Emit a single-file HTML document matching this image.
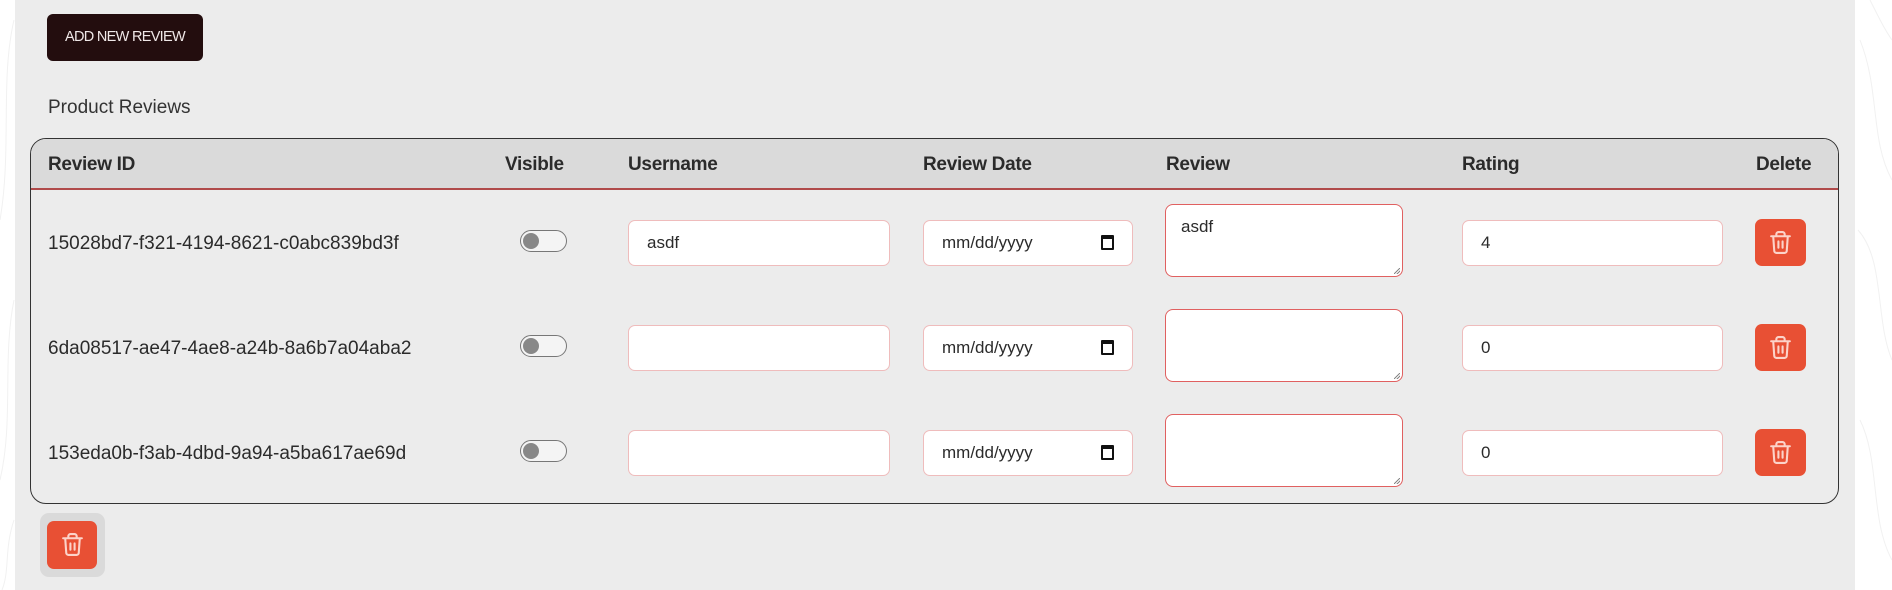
<!DOCTYPE html>
<html><head><style>
*{box-sizing:border-box;margin:0;padding:0}
body{width:1892px;height:590px;background:#fff;font-family:"Liberation Sans",sans-serif;position:relative;overflow:hidden;color:#2b2b2b}
#panel{position:absolute;left:15px;top:0;width:1840px;height:590px;background:#ececec}
.btn{position:absolute;left:47px;top:14px;width:156px;height:47px;background:#230d0e;border-radius:6px;color:#f0e8e8;font-size:14.5px;letter-spacing:-0.7px;line-height:47px;text-align:center}
.title{position:absolute;left:48px;top:97px;font-size:19px;color:#333}
.table{position:absolute;left:30px;top:138px;width:1809px;height:366px;border:1px solid #333;border-radius:16px;overflow:hidden}
.head{position:absolute;left:0;top:0;width:100%;height:51px;background:#dadada;border-bottom:2px solid #b04a4a}
.h{position:absolute;top:15px;font-weight:bold;font-size:19px;color:#2b2b2b;letter-spacing:-0.3px}
.id{position:absolute;left:17px;font-size:19px}
.tog{position:absolute;left:489px;width:47px;height:22px;border:1px solid #777;border-radius:11px;background:#f4f4f4}
.tog:after{content:"";position:absolute;left:2px;top:2px;width:16px;height:16px;border-radius:50%;background:#888}
.in{position:absolute;height:46px;background:#fff;border:1px solid #efbcbc;border-radius:7px;font-size:17px;padding-left:18px;line-height:44px}
.ta{position:absolute;left:1134px;width:238px;height:73px;background:#fff;border:1.5px solid #e06060;border-radius:8px;font-size:17px;padding:12px 15px}
.ta:after{content:"";position:absolute;right:2px;bottom:2px;width:6px;height:6px;background:linear-gradient(135deg,transparent 45%,#888 45%,#888 55%,transparent 55%,transparent 70%,#888 70%,#888 80%,transparent 80%)}
.del{position:absolute;left:1724px;width:51px;height:47px;background:#e85034;border-radius:7px}
.del svg,.bdel svg{position:absolute;left:13px;top:11px}
.cal{position:absolute;right:18px;top:14px;width:13px;height:15px;border:2px solid #111;border-top-width:4px;border-radius:1px}
</style></head><body>
<svg style="position:absolute;left:0;top:0" width="1892" height="590" fill="none" stroke="#f1f1f1" stroke-width="1">
<path d="M14 20 C0 80 12 150 0 220 M14 300 C2 360 14 420 0 480 M14 520 C4 550 10 570 2 590"/>
<path d="M1860 40 C1880 90 1870 140 1892 180 M1858 230 C1885 260 1875 320 1892 360 M1860 420 C1880 460 1870 520 1892 560 M1870 0 C1880 20 1885 30 1892 40"/>
</svg>
<div id="panel"></div>
<div class="btn">ADD NEW REVIEW</div>
<div class="title">Product Reviews</div>
<div class="table">
 <div class="head">
  <div class="h" style="left:17px">Review ID</div>
  <div class="h" style="left:474px">Visible</div>
  <div class="h" style="left:597px">Username</div>
  <div class="h" style="left:892px">Review Date</div>
  <div class="h" style="left:1135px">Review</div>
  <div class="h" style="left:1431px">Rating</div>
  <div class="h" style="left:1725px">Delete</div>
 </div>
 <div class="id" style="top:94px">15028bd7-f321-4194-8621-c0abc839bd3f</div>
 <div class="tog" style="top:91px"></div>
 <div class="in" style="left:597px;top:81px;width:262px">asdf</div>
 <div class="in" style="left:892px;top:81px;width:210px">mm/dd/yyyy<span class="cal"></span></div>
 <div class="ta" style="top:65px">asdf</div>
 <div class="in" style="left:1431px;top:81px;width:261px">4</div>
 <div class="del" style="top:80px"><svg width="25" height="25" viewBox="0 0 24 24" fill="none" stroke="#fcd3c9" stroke-width="2" stroke-linecap="round" stroke-linejoin="round"><path d="M3 6h18M8 6V4a2 2 0 0 1 2-2h4a2 2 0 0 1 2 2v2M5 6l1 14a2 2 0 0 0 2 2h8a2 2 0 0 0 2-2l1-14M10 11v6M14 11v6"/></svg></div>

 <div class="id" style="top:199px">6da08517-ae47-4ae8-a24b-8a6b7a04aba2</div>
 <div class="tog" style="top:196px"></div>
 <div class="in" style="left:597px;top:186px;width:262px"></div>
 <div class="in" style="left:892px;top:186px;width:210px">mm/dd/yyyy<span class="cal"></span></div>
 <div class="ta" style="top:170px"></div>
 <div class="in" style="left:1431px;top:186px;width:261px">0</div>
 <div class="del" style="top:185px"><svg width="25" height="25" viewBox="0 0 24 24" fill="none" stroke="#fcd3c9" stroke-width="2" stroke-linecap="round" stroke-linejoin="round"><path d="M3 6h18M8 6V4a2 2 0 0 1 2-2h4a2 2 0 0 1 2 2v2M5 6l1 14a2 2 0 0 0 2 2h8a2 2 0 0 0 2-2l1-14M10 11v6M14 11v6"/></svg></div>

 <div class="id" style="top:304px">153eda0b-f3ab-4dbd-9a94-a5ba617ae69d</div>
 <div class="tog" style="top:301px"></div>
 <div class="in" style="left:597px;top:291px;width:262px"></div>
 <div class="in" style="left:892px;top:291px;width:210px">mm/dd/yyyy<span class="cal"></span></div>
 <div class="ta" style="top:275px"></div>
 <div class="in" style="left:1431px;top:291px;width:261px">0</div>
 <div class="del" style="top:290px"><svg width="25" height="25" viewBox="0 0 24 24" fill="none" stroke="#fcd3c9" stroke-width="2" stroke-linecap="round" stroke-linejoin="round"><path d="M3 6h18M8 6V4a2 2 0 0 1 2-2h4a2 2 0 0 1 2 2v2M5 6l1 14a2 2 0 0 0 2 2h8a2 2 0 0 0 2-2l1-14M10 11v6M14 11v6"/></svg></div>
</div>
<div style="position:absolute;left:40px;top:513px;width:65px;height:64px;background:#dadada;border-radius:9px"></div>
<div class="bdel" style="position:absolute;left:47px;top:521px;width:50px;height:48px;background:#e85034;border-radius:7px"><svg width="25" height="25" viewBox="0 0 24 24" fill="none" stroke="#fcd3c9" stroke-width="2" stroke-linecap="round" stroke-linejoin="round"><path d="M3 6h18M8 6V4a2 2 0 0 1 2-2h4a2 2 0 0 1 2 2v2M5 6l1 14a2 2 0 0 0 2 2h8a2 2 0 0 0 2-2l1-14M10 11v6M14 11v6"/></svg></div>
</body></html>
